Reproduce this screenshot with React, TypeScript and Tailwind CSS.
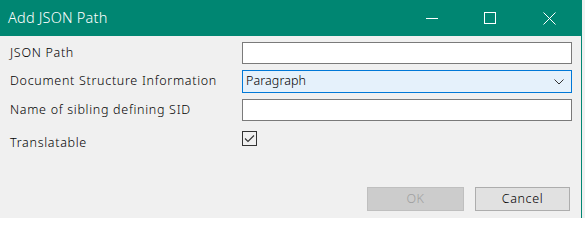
import React from "react";

const font = { fontFamily: '"Noto Sans", "Liberation Sans", Arial, sans-serif' };

export default function App() {
  return (
    <div className="w-[585px] h-[218px] bg-[#f0f0f0] overflow-hidden font-light" style={font}>
      <div className="w-[582px] h-[218px] border-r border-[#008672] flex flex-col">
        {/* Title bar */}
        <div className="h-[36px] bg-[#008672] flex items-center text-white shrink-0">
          <div className="pl-[8px] text-[14.5px] flex-1 tracking-[0.2px]">Add JSON Path</div>
          <div className="w-[12px] h-[36px] flex items-center justify-center">
            <div className="w-[12px] h-px bg-white" />
          </div>
          <div className="w-[12px] h-[36px] ml-[46px] flex items-center justify-center">
            <div className="w-[12px] h-[12px] border border-white" />
          </div>
          <div className="w-[13px] h-[36px] ml-[47px] mr-[25px] flex items-center justify-center">
            <svg width="13" height="13" viewBox="0 0 13 13">
              <path d="M0.5 0.5 L12.5 12.5 M12.5 0.5 L0.5 12.5" stroke="white" strokeWidth="1" />
            </svg>
          </div>
        </div>

        {/* Form */}
        <div className="flex flex-col text-[12.5px] text-black tracking-[0.7px]">
          <div className="flex items-center mt-[6px] h-[22px]">
            <div className="w-[242px] pl-[10px]">JSON Path</div>
            <div className="w-[330px] h-[22px] bg-white border border-[#7a7a7a]" />
          </div>
          <div className="flex items-center mt-[6px] h-[23px]">
            <div className="w-[242px] pl-[10px]">Document Structure Information</div>
            <div className="w-[330px] h-[23px] bg-[#e5f1fb] border border-[#0078d7] flex items-center pl-[3px] pr-[7px]">
              <span className="flex-1 tracking-[0.1px]">Paragraph</span>
              <svg width="10" height="6" viewBox="0 0 10 6">
                <path d="M0.5 0.5 L5 5 L9.5 0.5" stroke="#333" strokeWidth="1" fill="none" />
              </svg>
            </div>
          </div>
          <div className="flex items-center mt-[6px] h-[22px]">
            <div className="w-[242px] pl-[10px]">Name of sibling defining SID</div>
            <div className="w-[330px] h-[22px] bg-white border border-[#7a7a7a]" />
          </div>
          <div className="flex items-center mt-[10px] h-[15px]">
            <div className="w-[242px] pl-[10px] mt-[9px]">Translatable</div>
            <div className="w-[15px] h-[15px] bg-[#f0f0f0] border border-[#333] flex items-center justify-center">
              <svg width="11" height="9" viewBox="0 0 11 9">
                <path d="M1 4.5 L4 7.5 L10 1.5" stroke="#333" strokeWidth="1.1" fill="none" />
              </svg>
            </div>
          </div>
        </div>

        {/* Buttons */}
        <div className="flex justify-end mt-[41px] gap-[11px] pr-[11px] text-[12.5px] tracking-[0.6px]">
          <div className="w-[97px] h-[24px] bg-[#cccccc] border border-[#bfbfbf] text-[#a0a0a0] flex items-center justify-center">
            OK
          </div>
          <div className="w-[95px] h-[24px] bg-[#e1e1e1] border border-[#adadad] text-black flex items-center justify-center">
            Cancel
          </div>
        </div>
      </div>
    </div>
  );
}
